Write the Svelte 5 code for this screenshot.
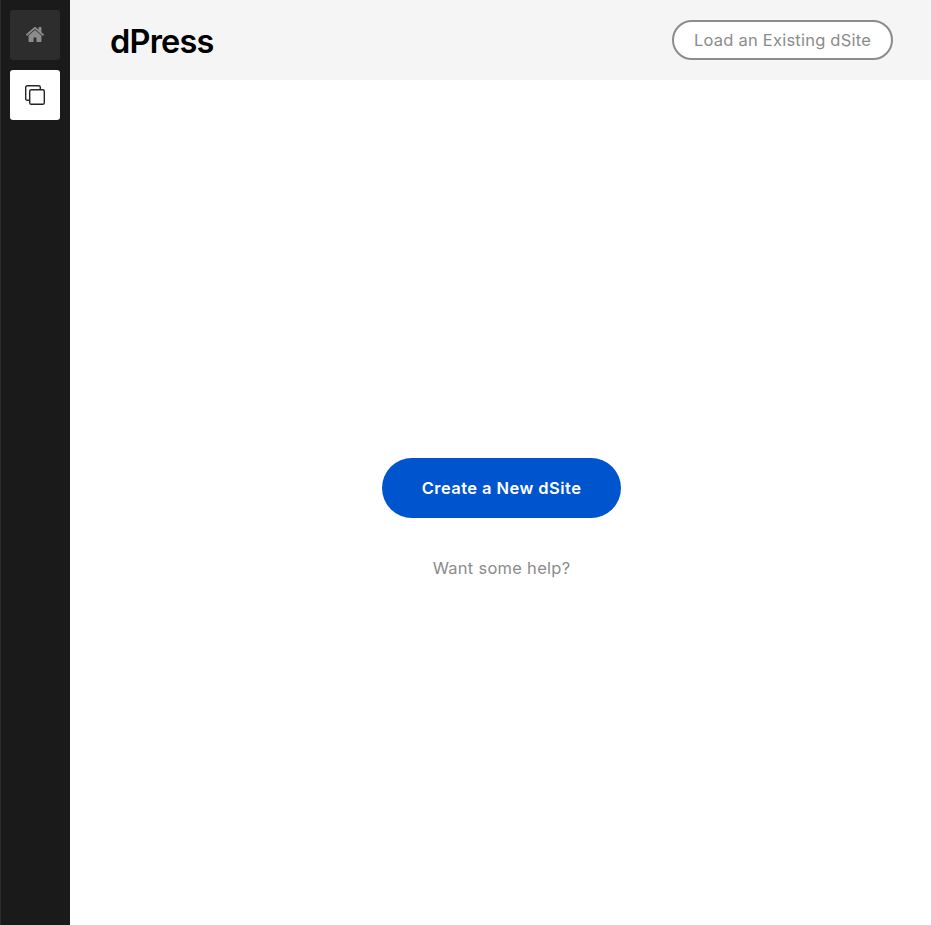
<script>
  const title = 'dPress';
</script>

<div class="app">
  <nav class="sidebar">
    <button class="tile home" aria-label="Home">
      <svg width="18" height="15" viewBox="26 253 1612 1283" preserveAspectRatio="none">
        <path fill="#8c8c8c" d="M1408 992v480q0 26-19 45t-45 19H960v-384H704v384H320q-26 0-45-19t-19-45V992q0-1 .5-3t.5-3l575-474 575 474q1 2 1 6zm223-69l-62 74q-8 9-21 11h-3q-13 0-21-7L832 424 140 1001q-12 8-24 7-13-2-21-11l-62-74q-8-10-7-23.5T37 878l719-599q32-26 76-26t76 26l244 204V288q0-14 9-23t23-9h192q14 0 23 9t9 23v408l219 182q10 8 11 21.5t-7 23.5z" />
      </svg>
    </button>
    <button class="tile active" aria-label="Sites">
      <svg width="20" height="20" viewBox="0 0 20 20" fill="none" stroke="#252525" stroke-width="1.4">
        <path d="M4.5 15.3H2.3A1.6 1.6 0 0 1 .7 13.7V2.3A1.6 1.6 0 0 1 2.3.7h11.4a1.6 1.6 0 0 1 1.6 1.6v2.2" />
        <rect x="4.7" y="4.7" width="14.6" height="14.6" rx="1.6" />
      </svg>
    </button>
  </nav>
  <div class="page">
    <header>
      <h1>{title}</h1>
      <button class="load">Load an Existing dSite</button>
    </header>
    <main>
      <button class="create">Create a New dSite</button>
      <a class="help" href="#help">Want some help?</a>
    </main>
  </div>
</div>

<style>
  :global(body) { margin: 0; }
  .app {
    display: flex;
    width: 100%;
    height: 100vh;
    background: #fff;
    font-family: Inter, "Liberation Sans", sans-serif;
  }
  button { font: inherit; border: 0; margin: 0; box-sizing: border-box; }
  .sidebar {
    flex: none;
    box-sizing: border-box;
    width: 70px;
    padding: 10px 10px 0 9px;
    display: flex;
    flex-direction: column;
    gap: 10px;
    background: #1a1a1a;
    border-left: 1px solid #2c2c2c;
  }
  .tile {
    width: 50px;
    height: 50px;
    padding: 0;
    border-radius: 3px;
    display: flex;
    align-items: center;
    justify-content: center;
    background: #2d2d2d;
  }
  .tile.home { padding-bottom: 1px; }
  .tile.active { background: #fff; }
  .page { flex: 1; display: flex; flex-direction: column; }
  header {
    height: 80px;
    box-sizing: border-box;
    padding: 0 38px 0 40px;
    display: flex;
    align-items: center;
    justify-content: space-between;
    background: #f5f5f5;
  }
  h1 {
    margin: 0;
    padding-top: 3px;
    font-size: 32.5px;
    line-height: 40px;
    font-weight: 600;
    letter-spacing: -0.8px;
    color: #000;
  }
  .load {
    width: 221px;
    height: 40px;
    padding: 0;
    border: 2px solid #8c8c8c;
    border-radius: 20px;
    background: #fff;
    color: #8c8c8c;
    font-size: 16.5px;
    letter-spacing: 0.22px;
    white-space: nowrap;
  }
  main {
    flex: 1;
    padding: 378px 0 0 1px;
    display: flex;
    flex-direction: column;
    align-items: center;
  }
  .create {
    width: 239px;
    height: 60px;
    padding: 0 0 0 1px;
    border-radius: 30px;
    background: #0055cf;
    color: #fff;
    font-size: 16.5px;
    font-weight: 600;
    letter-spacing: 0.44px;
  }
  .help {
    margin-top: 40px;
    padding-left: 1px;
    line-height: 21px;
    font-size: 16.5px;
    letter-spacing: 0.27px;
    color: #8c8c8c;
    text-decoration: none;
  }
</style>
